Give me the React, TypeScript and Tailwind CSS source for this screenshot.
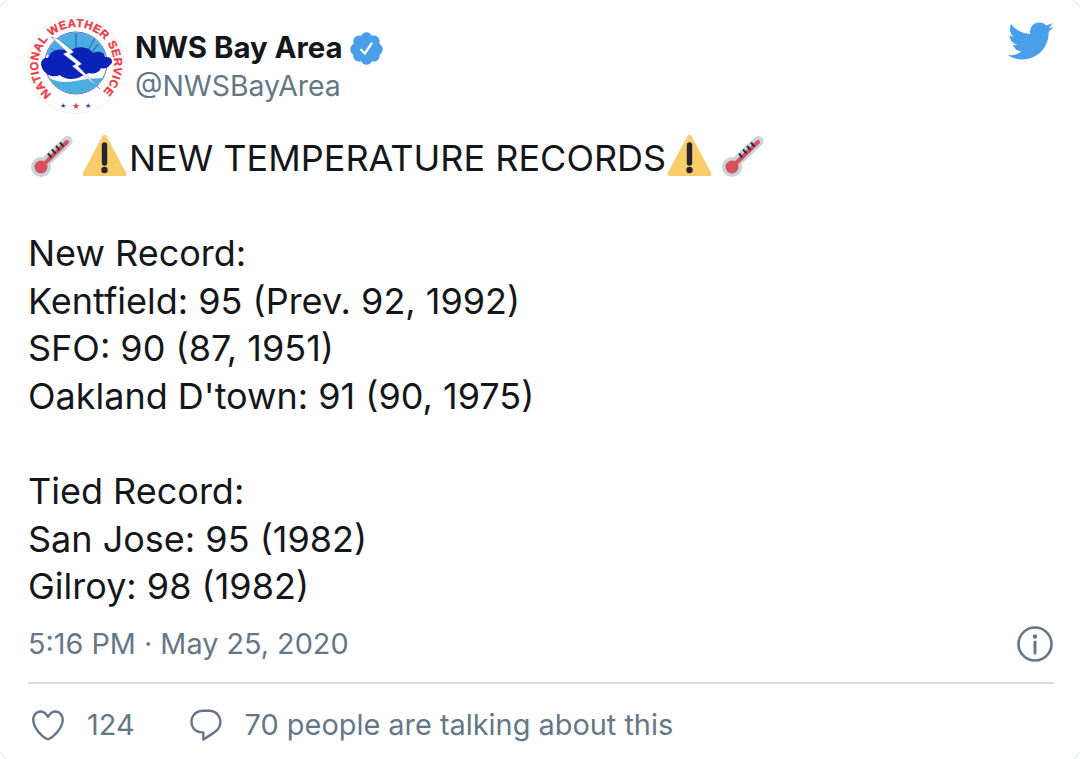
import { type ReactNode } from "react";

const font = "font-['Inter','Liberation_Sans',sans-serif]";

function Thermometer() {
  return (
    <svg viewBox="0 2 47 47" className="w-[47px] h-[47px] shrink-0">
      <path d="M13 33 L39.5 8" stroke="#c9d3da" strokeWidth="10" strokeLinecap="round" />
      <circle cx="13" cy="34" r="10" fill="#c9d3da" />
      <path d="M14 33 L39 9" stroke="#d8505c" strokeWidth="4" strokeLinecap="round" />
      <circle cx="13" cy="34" r="6.5" fill="#d8505c" />
      <path
        d="M20 20.5 L23.5 24.5 M24 16.5 L27.5 20.5 M28 13 L31.5 17 M32 9.5 L35.5 13.5"
        stroke="#2e3338"
        strokeWidth="2"
      />
    </svg>
  );
}

function Warning() {
  return (
    <svg viewBox="0 3 47 47" className="w-[47px] h-[47px] shrink-0">
      <path
        d="M23.5 3 C24.5 3 25.3 3.6 25.8 4.6 L45.2 41 C46 42.6 45.2 44 43.4 44 L3.6 44 C1.8 44 1 42.6 1.8 41 L21.2 4.6 C21.7 3.6 22.5 3 23.5 3 Z"
        fill="#f8cc68"
      />
      <path d="M23.5 13 L23.5 31" stroke="#23272b" strokeWidth="5.4" strokeLinecap="round" />
      <circle cx="23.5" cy="38" r="3.2" fill="#23272b" />
    </svg>
  );
}

function NwsLogo() {
  return (
    <svg viewBox="0 0 98 98" className="w-[98px] h-[98px] shrink-0">
      <circle cx="49" cy="49" r="48.5" fill="#ffffff" stroke="#f1f3f5" />
      <defs>
        <path id="ring" d="M 24.6 78.1 A 38 38 0 1 1 75.9 75.9" />
      </defs>
      <text fill="#ef3b45" stroke="#ef3b45" strokeWidth="0.35" fontSize="11.5" fontWeight="700" fontFamily="Liberation Sans, sans-serif">
        <textPath href="#ring" textLength="182" lengthAdjust="spacing">NATIONAL WEATHER SERVICE</textPath>
      </text>
      <circle cx="49" cy="47" r="31" fill="#ffffff" stroke="#3a3fa8" strokeWidth="0.8" />
      <path d="M19.5 38 A31 31 0 0 1 78.5 38 L66 46 L32 46 Z" fill="#4aaee0" />
      <path d="M22 62 Q34 68 48 65 Q62 62 76 62 A31 31 0 0 1 22 62 Z" fill="#4aaee0" />
      <path d="M24 32 L34 40 M49 17 L49 33 M68 22 L60 36 M71 28 L64 38" stroke="#2d3f9e" strokeWidth="0.8" />
      <path
        d="M15 52 C12 45 17 41 21 42 C24 32 37 32 42 36 C48 29 62 30 66 37 C72 34 78 37 78 41 C85 40 87 46 83 49 C80 53 76 53 74 52 C72 58 64 58 62 57 L55 60 C48 65 36 63 33 59 C27 62 19 60 15 52 Z"
        fill="#0a22b8"
      />
      <path
        d="M24 21 L31 23 L47 36 L43 38 L55 48 L51 50 L73 73 L45 50 L49 48 L36 38 L40 36 Z"
        fill="#ffffff"
        stroke="#3a3fa8"
        strokeWidth="0.4"
      />
      <text x="33" y="92" fontSize="7" fill="#2a3fb0" fontFamily="DejaVu Sans, sans-serif">★</text>
      <text x="45" y="93" fontSize="9" fill="#ef3b45" fontFamily="DejaVu Sans, sans-serif">★</text>
      <text x="58" y="92" fontSize="7" fill="#2a3fb0" fontFamily="DejaVu Sans, sans-serif">★</text>
    </svg>
  );
}

function TextLine(props: { children?: ReactNode }) {
  return <p className="h-[47.6px] leading-[47.6px] whitespace-pre">{props.children}</p>;
}

export default function App() {
  return (
    <div className={`h-[759px] w-[1080px] overflow-hidden bg-white ${font}`}>
      <div className="-ml-[6px] -mt-[6px] h-[771px] w-[1092px] rounded-[30px] border border-[#dfe5ea] pl-[33px] pr-[31px] pt-[21px]">
        <div className="flex items-start">
          <div className="-ml-[1px]">
            <NwsLogo />
          </div>
          <div className="ml-[10px] flex-1 pt-[13px]">
            <div className="flex items-center h-[38px]">
              <span className="text-[29.4px] font-bold text-[#14171a]">NWS Bay Area</span>
              <svg viewBox="0 0 24 24" className="ml-[5px] h-[37px] w-[37px] fill-[#4a9fea]">
                <path d="M22.5 12.5c0-1.58-.875-2.95-2.148-3.6.154-.435.238-.905.238-1.4 0-2.21-1.71-3.998-3.818-3.998-.47 0-.92.084-1.336.25C14.818 2.415 13.51 1.5 12 1.5s-2.816.917-3.437 2.25c-.415-.165-.866-.25-1.336-.25-2.11 0-3.818 1.79-3.818 4 0 .494.083.964.237 1.4-1.272.65-2.147 2.018-2.147 3.6 0 1.495.782 2.798 1.942 3.486-.02.17-.032.34-.032.514 0 2.21 1.708 4 3.818 4 .47 0 .92-.086 1.335-.25.62 1.334 1.926 2.25 3.437 2.25 1.512 0 2.818-.916 3.437-2.25.415.163.865.248 1.336.248 2.11 0 3.818-1.79 3.818-4 0-.174-.012-.344-.033-.513 1.158-.687 1.943-1.99 1.943-3.484zm-6.616-3.334l-4.334 6.5c-.145.217-.382.334-.625.334-.143 0-.288-.04-.416-.126l-.115-.094-2.415-2.415c-.293-.293-.293-.768 0-1.06s.768-.294 1.06 0l1.77 1.767 3.825-5.74c.23-.345.696-.436 1.04-.207.346.23.44.696.21 1.04z" />
              </svg>
            </div>
            <div className="text-[28.4px] leading-[38px] text-[#657786]">@NWSBayArea</div>
          </div>
          <svg viewBox="0 0 24 24" className="mt-[1px] h-[48px] w-[48px] fill-[#4a9fea]">
            <path d="M23.643 4.937c-.835.37-1.732.62-2.675.733.962-.576 1.7-1.49 2.048-2.578-.9.534-1.897.922-2.958 1.13-.85-.904-2.06-1.47-3.4-1.47-2.572 0-4.658 2.086-4.658 4.66 0 .364.042.718.12 1.06-3.873-.195-7.304-2.05-9.602-4.868-.4.69-.63 1.49-.63 2.342 0 1.616.823 3.043 2.072 3.878-.764-.025-1.482-.234-2.11-.583v.06c0 2.257 1.605 4.14 3.737 4.568-.392.106-.803.162-1.227.162-.3 0-.593-.028-.877-.082.593 1.85 2.313 3.198 4.352 3.234-1.595 1.25-3.604 1.995-5.786 1.995-.376 0-.747-.022-1.112-.065 2.062 1.323 4.51 2.093 7.14 2.093 8.57 0 13.255-7.098 13.255-13.254 0-.2-.005-.402-.014-.602.91-.658 1.7-1.477 2.323-2.41z" />
          </svg>
        </div>

        <div className="mt-[21px] text-[36px] text-[#14171a]">
          <div className="flex h-[47.6px] items-center leading-[47.6px]">
            <Thermometer />
            <span className="w-[6px]" />
            <Warning />
            <span className="ml-[1px]">NEW TEMPERATURE RECORDS</span>
            <Warning />
            <span className="w-[6px]" />
            <Thermometer />
          </div>
          <TextLine> </TextLine>
          <TextLine>New Record:</TextLine>
          <TextLine>Kentfield: 95 (Prev. 92, 1992)</TextLine>
          <TextLine>SFO: 90 (87, 1951)</TextLine>
          <TextLine>Oakland D'town: 91 (90, 1975)</TextLine>
          <TextLine> </TextLine>
          <TextLine>Tied Record:</TextLine>
          <TextLine>San Jose: 95 (1982)</TextLine>
          <TextLine>Gilroy: 98 (1982)</TextLine>
        </div>

        <div className="mt-[13px] flex h-[40px] items-center justify-between text-[28.8px] text-[#657786]">
          <span>5:16 PM · May 25, 2020</span>
          <svg viewBox="0 0 38 38" className="h-[38px] w-[38px]" fill="none" stroke="#657786">
            <circle cx="19" cy="19" r="16.5" strokeWidth="2.6" />
            <path d="M19 17 L19 28" strokeWidth="3" strokeLinecap="round" />
            <circle cx="19" cy="11.5" r="2.2" fill="#657786" stroke="none" />
          </svg>
        </div>

        <div className="mt-[18px] h-[2px] bg-[#d5dde3]" />

        <div className="flex h-[82px] items-center text-[28.9px] text-[#657786]">
          <svg viewBox="0 0 24 24" className="ml-[1px] h-[38px] w-[38px] fill-[#657786]">
            <path d="M12 21.638h-.014C9.403 21.59 1.95 14.856 1.95 8.478c0-3.064 2.525-5.754 5.403-5.754 2.29 0 3.83 1.58 4.646 2.73.814-1.148 2.354-2.73 4.645-2.73 2.88 0 5.404 2.69 5.404 5.755 0 6.376-7.454 13.11-10.037 13.157H12zM7.354 4.225c-2.08 0-3.903 1.988-3.903 4.255 0 5.74 7.034 11.596 8.55 11.658 1.518-.062 8.55-5.917 8.55-11.658 0-2.267-1.823-4.255-3.903-4.255-2.528 0-3.94 2.936-3.952 2.965-.23.562-1.156.562-1.387 0-.015-.03-1.426-2.965-3.955-2.965z" />
          </svg>
          <span className="ml-[20px]">124</span>
          <svg viewBox="0 0 24 24" className="ml-[52px] h-[38px] w-[38px] fill-[#657786]">
            <path d="M14.046 2.242l-4.148-.01h-.002c-4.374 0-7.8 3.427-7.8 7.802 0 4.098 3.186 7.206 7.465 7.37v3.828c0 .108.044.286.12.403.142.225.384.347.632.347.138 0 .277-.038.402-.118.264-.168 6.473-4.14 8.088-5.506 1.902-1.61 3.04-3.97 3.043-6.312v-.017c-.006-4.367-3.43-7.787-7.8-7.788zm3.787 12.972c-1.134.96-4.862 3.405-6.772 4.643V16.67c0-.414-.335-.75-.75-.75h-.396c-3.66 0-6.318-2.476-6.318-5.886 0-3.534 2.768-6.302 6.3-6.302l4.147.01h.002c3.532 0 6.3 2.766 6.302 6.296-.003 1.91-.942 3.844-2.514 5.176z" />
          </svg>
          <span className="ml-[20px]">70 people are talking about this</span>
        </div>
      </div>
    </div>
  );
}
